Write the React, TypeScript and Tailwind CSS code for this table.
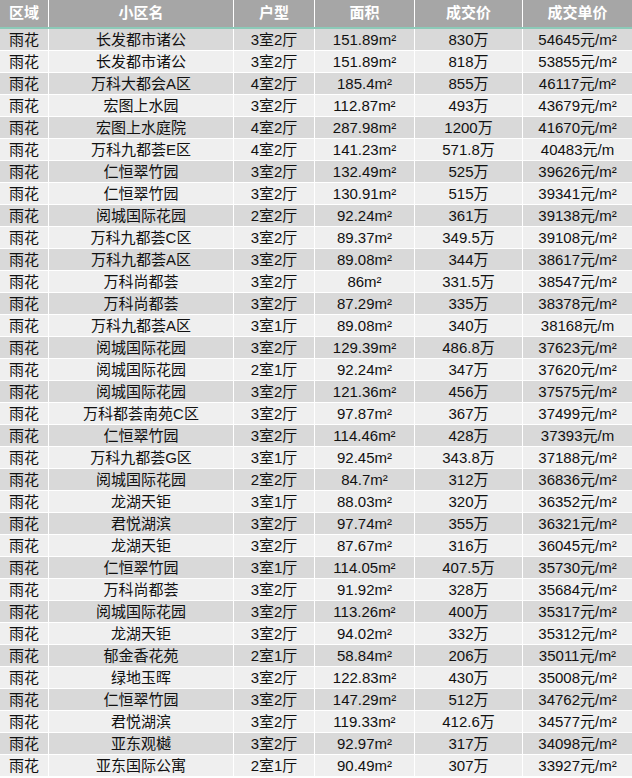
const rows: [string, string, string, string, string][] = [
  ['长发都市诸公', '3室2厅', '151.89m²', '830万', '54645元/m²'],
  ['长发都市诸公', '3室2厅', '151.89m²', '818万', '53855元/m²'],
  ['万科大都会A区', '4室2厅', '185.4m²', '855万', '46117元/m²'],
  ['宏图上水园', '3室2厅', '112.87m²', '493万', '43679元/m²'],
  ['宏图上水庭院', '4室2厅', '287.98m²', '1200万', '41670元/m²'],
  ['万科九都荟E区', '4室2厅', '141.23m²', '571.8万', '40483元/m'],
  ['仁恒翠竹园', '3室2厅', '132.49m²', '525万', '39626元/m²'],
  ['仁恒翠竹园', '3室2厅', '130.91m²', '515万', '39341元/m²'],
  ['阅城国际花园', '2室2厅', '92.24m²', '361万', '39138元/m²'],
  ['万科九都荟C区', '3室2厅', '89.37m²', '349.5万', '39108元/m²'],
  ['万科九都荟A区', '3室2厅', '89.08m²', '344万', '38617元/m²'],
  ['万科尚都荟', '3室2厅', '86m²', '331.5万', '38547元/m²'],
  ['万科尚都荟', '3室2厅', '87.29m²', '335万', '38378元/m²'],
  ['万科九都荟A区', '3室1厅', '89.08m²', '340万', '38168元/m'],
  ['阅城国际花园', '3室2厅', '129.39m²', '486.8万', '37623元/m²'],
  ['阅城国际花园', '2室1厅', '92.24m²', '347万', '37620元/m²'],
  ['阅城国际花园', '3室2厅', '121.36m²', '456万', '37575元/m²'],
  ['万科都荟南苑C区', '3室2厅', '97.87m²', '367万', '37499元/m²'],
  ['仁恒翠竹园', '3室2厅', '114.46m²', '428万', '37393元/m'],
  ['万科九都荟G区', '3室1厅', '92.45m²', '343.8万', '37188元/m²'],
  ['阅城国际花园', '2室2厅', '84.7m²', '312万', '36836元/m²'],
  ['龙湖天钜', '3室1厅', '88.03m²', '320万', '36352元/m²'],
  ['君悦湖滨', '3室2厅', '97.74m²', '355万', '36321元/m²'],
  ['龙湖天钜', '3室2厅', '87.67m²', '316万', '36045元/m²'],
  ['仁恒翠竹园', '3室1厅', '114.05m²', '407.5万', '35730元/m²'],
  ['万科尚都荟', '3室2厅', '91.92m²', '328万', '35684元/m²'],
  ['阅城国际花园', '3室2厅', '113.26m²', '400万', '35317元/m²'],
  ['龙湖天钜', '3室2厅', '94.02m²', '332万', '35312元/m²'],
  ['郁金香花苑', '2室1厅', '58.84m²', '206万', '35011元/m²'],
  ['绿地玉晖', '3室2厅', '122.83m²', '430万', '35008元/m²'],
  ['仁恒翠竹园', '3室2厅', '147.29m²', '512万', '34762元/m²'],
  ['君悦湖滨', '3室2厅', '119.33m²', '412.6万', '34577元/m²'],
  ['亚东观樾', '3室2厅', '92.97m²', '317万', '34098元/m²'],
  ['亚东国际公寓', '2室1厅', '90.49m²', '307万', '33927元/m²'],
];

const cols = 'grid grid-cols-[48px_184px_80px_99px_107px_109px] gap-x-px';
const headers = ['小区名', '户型', '面积', '成交价', '成交单价'];

export default function App() {
  return (
    <div
      className="w-[632px] h-[778px] overflow-hidden bg-white text-[15px] text-[#111]"
      style={{ fontFamily: '"Liberation Sans", "Noto Sans CJK SC", sans-serif' }}
    >
      <div className={`${cols} h-[27px] font-bold text-white`}>
        <div className="flex items-center bg-[#a6a6a6] pl-[9px]">区域</div>
        {headers.map((h) => (
          <div key={h} className="flex items-center justify-center bg-[#a6a6a6]">
            {h}
          </div>
        ))}
      </div>
      <div className="h-[2px] bg-[#8ccab8]" />
      <div className="flex flex-col gap-y-px">
        {rows.map((r, i) => {
          const bg = i % 2 === 0 ? 'bg-[#d9d9d9]' : 'bg-[#efefef]';
          return (
            <div key={i} className={`${cols} h-[21px] leading-none`}>
              <div className={`flex items-center pl-[9px] ${bg}`}>雨花</div>
              {r.map((c, j) => (
                <div key={j} className={`flex items-center justify-center ${bg}`}>
                  {c}
                </div>
              ))}
            </div>
          );
        })}
      </div>
    </div>
  );
}
